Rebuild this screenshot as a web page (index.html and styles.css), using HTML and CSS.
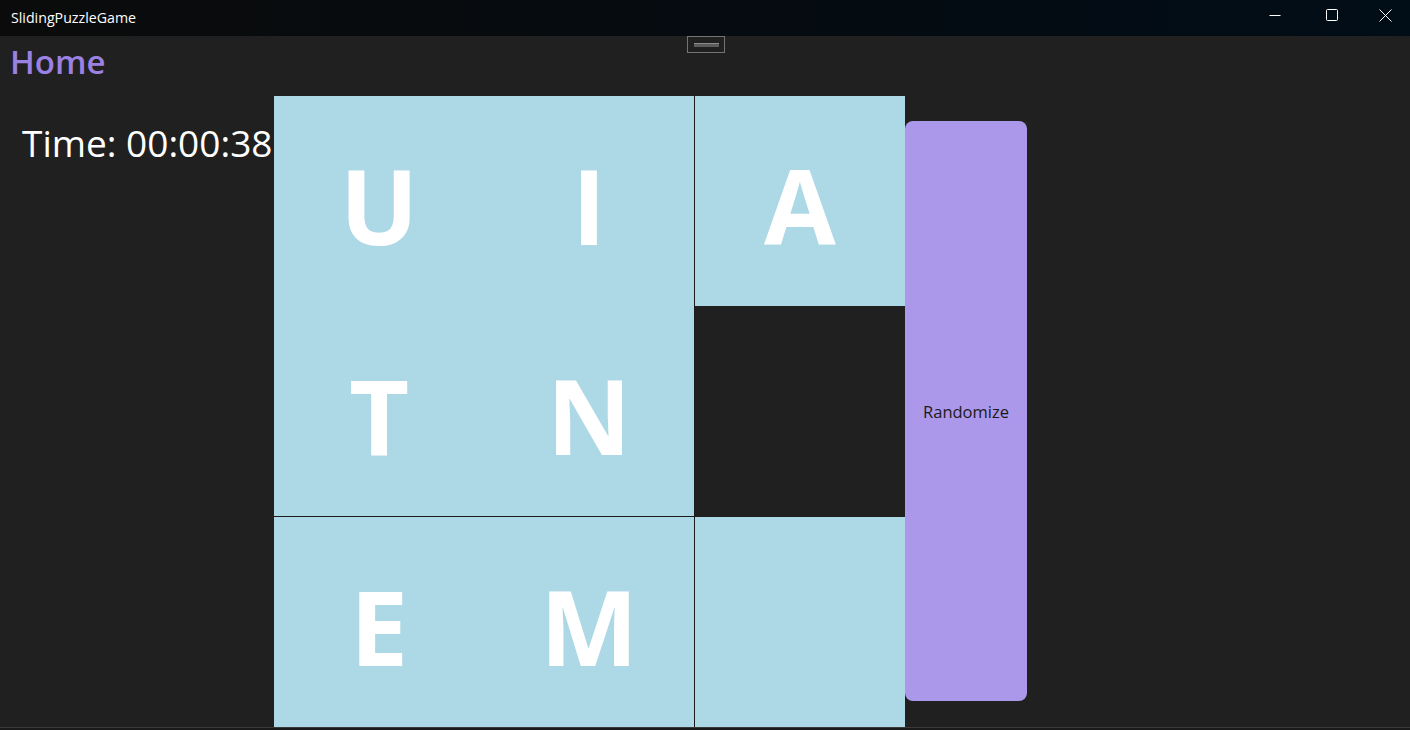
FILE: index.html
```html
<!DOCTYPE html>
<html>
<head>
<meta charset="utf-8">
<link rel="stylesheet" href="styles.css">
</head>
<body>
<div class="window">
  <div class="titlebar">
    <span class="app-title">SlidingPuzzleGame</span>
    <div class="controls">
      <span class="ctl"><svg width="12" height="12" viewBox="0 0 12 12"><path d="M0.5 6.5H11.5" stroke="#fff" stroke-width="1"/></svg></span>
      <span class="ctl"><svg width="12" height="12" viewBox="0 0 12 12"><rect x="0.5" y="0.5" width="11" height="11" rx="1" fill="none" stroke="#fff" stroke-width="1"/></svg></span>
      <span class="ctl"><svg width="13" height="13" viewBox="0 0 13 13"><path d="M0.5 0.5L12.5 12.5M12.5 0.5L0.5 12.5" stroke="#fff" stroke-width="1"/></svg></span>
    </div>
  </div>
  <div class="page">
    <div class="drag-handle"><span class="grip"></span></div>
    <h1 class="header">Home</h1>
    <div class="content">
      <div class="timer">Time: 00:00:38</div>
      <div class="board">
        <div class="tile">U</div>
        <div class="tile line-right">I</div>
        <div class="tile">A</div>
        <div class="tile line-bottom">T</div>
        <div class="tile line-right line-bottom">N</div>
        <div class="tile empty"></div>
        <div class="tile">E</div>
        <div class="tile line-right">M</div>
        <div class="tile"></div>
      </div>
      <button class="randomize">Randomize</button>
    </div>
  </div>
  <div class="bottom-edge"></div>
</div>
</body>
</html>
```
FILE: styles.css
```css
html, body {
  margin: 0;
  padding: 0;
  background: #202020;
}
.window {
  width: 1410px;
  height: 730px;
  overflow: hidden;
  display: flex;
  flex-direction: column;
  font-family: "Open Sans", "Noto Sans", sans-serif;
}
.titlebar {
  height: 36px;
  flex: none;
  display: flex;
  align-items: center;
  justify-content: space-between;
  background: linear-gradient(90deg, #0b0b0b 0%, #050b10 50%, #010d17 100%);
}
.app-title {
  color: #ffffff;
  font-size: 14.2px;
  padding-left: 11px;
  padding-bottom: 2px;
}
.controls {
  display: flex;
  height: 36px;
}
.ctl {
  width: 57px;
  height: 30px;
  display: flex;
  align-items: center;
  justify-content: center;
}
.ctl:last-child {
  width: 50px;
}
.page {
  position: relative;
  height: 691px;
  flex: none;
  background: #202020;
}
.drag-handle {
  position: absolute;
  left: 687px;
  top: 0;
  width: 36px;
  height: 15px;
  border: 1px solid #747474;
  display: flex;
  align-items: center;
  justify-content: center;
}
.grip {
  width: 25px;
  height: 4px;
  background: #5c5c5c;
  border-top: 1px solid #8a8a8a;
  box-sizing: border-box;
}
.header {
  margin: 0;
  height: 60px;
  padding-left: 10px;
  color: #9b82e2;
  font-size: 33px;
  font-weight: 600;
  line-height: 52px;
  box-sizing: border-box;
}
.content {
  display: flex;
  align-items: flex-start;
}
.timer {
  width: 274px;
  flex: none;
  box-sizing: border-box;
  padding-left: 22px;
  padding-top: 22px;
  color: #ffffff;
  font-size: 37px;
  line-height: 50px;
  white-space: nowrap;
}
.board {
  display: grid;
  grid-template-columns: 210px 211px 210px;
  grid-template-rows: 210px 211px 210px;
  flex: none;
}
.tile {
  background: #add8e6;
  color: #ffffff;
  font-family: "Open Sans", "Noto Sans", sans-serif;
  font-weight: 700;
  font-size: 104px;
  display: flex;
  align-items: center;
  justify-content: center;
  box-sizing: border-box;
  padding-top: 8px;
  line-height: 1;
}
.tile.empty {
  background: #202020;
}
.line-right {
  border-right: 1px solid #1c1c1c;
}
.line-bottom {
  border-bottom: 1px solid #1c1c1c;
}
.randomize {
  margin-top: 25px;
  width: 122px;
  height: 580px;
  flex: none;
  border: none;
  border-radius: 8px;
  background: #ac98ea;
  color: #1b1b1b;
  font-family: "Open Sans", "Noto Sans", sans-serif;
  font-size: 16.5px;
  padding: 0;
}
.bottom-edge {
  height: 3px;
  flex: none;
  background: #1a1a1a;
  border-top: 1px solid #3a3a3a;
}
```
